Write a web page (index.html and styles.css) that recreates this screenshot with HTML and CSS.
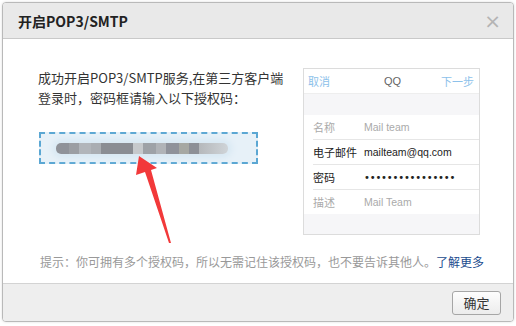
FILE: index.html
```html
<!DOCTYPE html>
<html lang="zh-CN">
<head>
    <meta charset="UTF-8">
    <title>开启POP3/SMTP</title>
    <link rel="stylesheet" href="styles.css">
</head>
<body>
    <div class="dialog">
        <div class="dialog-header">
            <span class="dialog-title">开启POP3/SMTP</span>
            <span class="close-btn">&times;</span>
        </div>
        <div class="dialog-body">
            <div class="body-row">
                <div class="left-col">
                    <p class="intro">成功开启POP3/SMTP服务,在第三方客户端<br>登录时，密码框请输入以下授权码：</p>
                    <div class="code-box">
                        <div class="code-blur"></div>
                    </div>
                </div>
                <div class="phone">
                    <div class="phone-top">
                        <span class="phone-link">取消</span>
                        <span class="phone-name">QQ</span>
                        <span class="phone-link">下一步</span>
                    </div>
                    <div class="phone-band"></div>
                    <div class="phone-rows">
                        <div class="phone-row muted"><span class="lbl">名称</span><span>Mail team</span></div>
                        <div class="phone-row"><span class="lbl">电子邮件</span><span>mailteam@qq.com</span></div>
                        <div class="phone-row"><span class="lbl">密码</span><span class="dots">••••••••••••••••</span></div>
                        <div class="phone-row muted"><span class="lbl">描述</span><span>Mail Team</span></div>
                    </div>
                    <div class="phone-band last"></div>
                </div>
            </div>
            <p class="hint">提示：你可拥有多个授权码，所以无需记住该授权码，也不要告诉其他人。<a href="#">了解更多</a></p>
        </div>
        <div class="dialog-footer">
            <button class="ok-btn">确定</button>
        </div>
        <svg class="arrow" viewBox="2 2 512 320" width="512" height="320">
            <polygon points="139,156 157,168 151,170 171,243 169,243 145,172 136,175" fill="#f2393a"/>
        </svg>
    </div>
</body>
</html>
```

FILE: styles.css
```css
html, body {
    margin: 0;
    padding: 0;
    background: #fff;
    font-family: "Noto Sans CJK SC", "Microsoft YaHei", sans-serif;
    color: #333;
}
body {
    padding: 2px;
}
.dialog {
    position: relative;
    width: 510px;
    height: 318px;
    border: 1px solid #b9b9b9;
    border-radius: 4px;
    background: #fff;
    box-shadow: 0 0 3px #0002;
    display: flex;
    flex-direction: column;
    overflow: hidden;
}
.dialog-header {
    height: 35px;
    background: #e9e9e9;
    border-bottom: 1px solid #c9c9c9;
    display: flex;
    align-items: center;
    justify-content: space-between;
    padding: 0 12px 0 15px;
}
.dialog-title {
    font-size: 14px;
    font-weight: bold;
    color: #222;
}
.close-btn {
    font-family: "DejaVu Sans", sans-serif;
    font-size: 20px;
    color: #b4b4b4;
    line-height: 1;
}
.dialog-body {
    flex: 1;
    padding: 29px 0 0 35px;
}
.body-row {
    display: flex;
}
.left-col {
    width: 265px;
}
.intro {
    margin: 0;
    font-size: 13px;
    line-height: 20px;
    color: #333;
}
.code-box {
    margin: 24px 0 0 1px;
    width: 200px;
    height: 28px;
    border: 2px dashed #5ba7d3;
    background: #e7f1f8;
    display: flex;
    align-items: center;
    padding-left: 15px;
}
.code-blur {
    width: 172px;
    height: 11px;
    border-radius: 5px;
    filter: blur(0.6px);
    box-shadow: 0 0 6px 4px #d8e8f3;
    background: linear-gradient(90deg,
        #8f9299 0, #8f9299 13px,
        #9b9ea3 13px, #9b9ea3 23px,
        #b1b5ba 23px, #b1b5ba 35px,
        #a9adb2 35px, #a9adb2 45px,
        #8a8d93 45px, #8a8d93 77px,
        #c6c9cc 77px, #c6c9cc 87px,
        #9ea2a7 87px, #9ea2a7 100px,
        #b0b3b7 100px, #b0b3b7 110px,
        #8f929a 110px, #8f929a 123px,
        #a6a8a3 123px, #a6a8a3 133px,
        #8d9097 133px, #8d9097 143px,
        #b5b8bb 143px, #cfd4d8 172px);
}
.phone {
    width: 175px;
    border: 1px solid #dcdcdc;
    font-size: 11px;
    color: #222;
    margin-left: 0;
}
.phone-top {
    height: 24px;
    display: flex;
    align-items: center;
    justify-content: space-between;
    padding: 0 5px 0 4px;
}
.phone-link {
    color: #8dc1ea;
}
.phone-name {
    color: #666;
    margin-left: 14px;
    font-family: "Liberation Sans", sans-serif;
}
.phone-band {
    height: 21px;
    background: #f6f6f8;
    border-top: 1px solid #eee;
}
.phone-band.last {
    height: 20px;
    border-top: none;
}
.phone-rows {
    padding-left: 9px;
}
.phone-row {
    height: 24px;
    display: flex;
    align-items: center;
    border-bottom: 1px solid #e6e6e6;
}
.phone-row span + span {
    font-family: "Liberation Sans", sans-serif;
    font-size: 10.5px;
}
.phone-row:last-child {
    border-bottom: none;
}
.phone-row.muted {
    color: #aaa;
}
.lbl {
    width: 51px;
}
.phone-row .dots {
    font-family: "DejaVu Sans", sans-serif;
    font-size: 10px;
    letter-spacing: -0.2px;
}
.hint {
    margin: 18px 0 0 2px;
    font-size: 12px;
    line-height: 18px;
    color: #999;
}
.hint a {
    color: #1b4c8e;
    text-decoration: none;
}
.dialog-footer {
    height: 37px;
    background: #eeeeee;
    border-top: 1px solid #d3d3d3;
    display: flex;
    align-items: center;
    justify-content: flex-end;
    padding-right: 12px;
}
.ok-btn {
    width: 49px;
    height: 24px;
    font-family: inherit;
    font-size: 13px;
    color: #333;
    border: 1px solid #a6a6a6;
    border-radius: 3px;
    background: linear-gradient(#fdfdfd, #ececec);
    padding: 0;
}
.arrow {
    position: absolute;
    left: -1px;
    top: -1px;
    pointer-events: none;
}
```
